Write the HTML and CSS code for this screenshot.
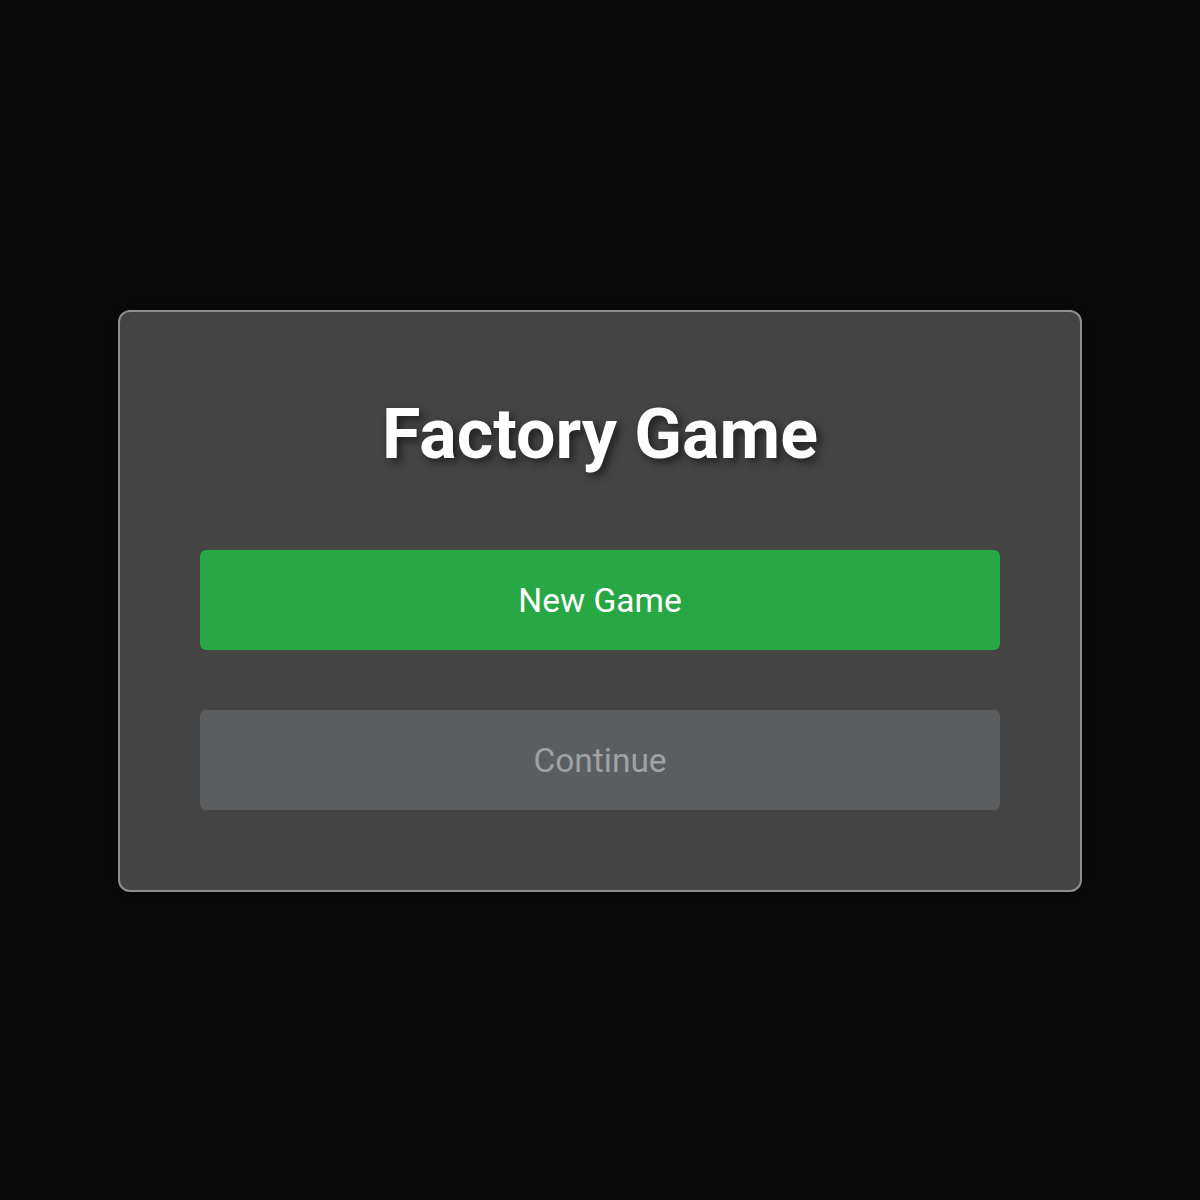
FILE: index.html
```html
<!DOCTYPE html>
<html>
<head>
<meta charset="utf-8">
<link rel="stylesheet" href="styles.css">
</head>
<body>
<div class="screen">
  <div class="card">
    <h1 class="title">Factory Game</h1>
    <div class="buttons">
      <button class="btn btn-primary">New Game</button>
      <button class="btn btn-disabled" disabled>Continue</button>
    </div>
  </div>
</div>
</body>
</html>
```
FILE: styles.css
```css
html, body {
  margin: 0;
  padding: 0;
  background: #0a0a0a;
  font-family: Roboto, "Liberation Sans", sans-serif;
}
.screen {
  box-sizing: border-box;
  width: 1200px;
  height: 1200px;
  padding-top: 2px;
  display: flex;
  align-items: center;
  justify-content: center;
}
.card {
  width: 800px;
  padding: 80px;
  background: #444444;
  border: 2px solid #8e8e8e;
  border-radius: 12px;
  box-shadow: 0 0 20px rgba(0,0,0,0.5);
  display: flex;
  flex-direction: column;
  align-items: center;
}
.title {
  margin: 0 0 74px 0;
  font-size: 70px;
  font-weight: 700;
  line-height: 84px;
  color: #ffffff;
  text-shadow: 4px 4px 8px rgba(0,0,0,0.55);
}
.buttons {
  width: 100%;
  display: flex;
  flex-direction: column;
  gap: 60px;
}
.btn {
  width: 100%;
  height: 100px;
  border: none;
  border-radius: 6px;
  font-family: Roboto, "Liberation Sans", sans-serif;
  font-size: 33.5px;
  padding: 0;
}
.btn-primary {
  background: #28a745;
  color: #ffffff;
}
.btn-disabled {
  background: #5a5e61;
  color: #9fa2a4;
}
```
